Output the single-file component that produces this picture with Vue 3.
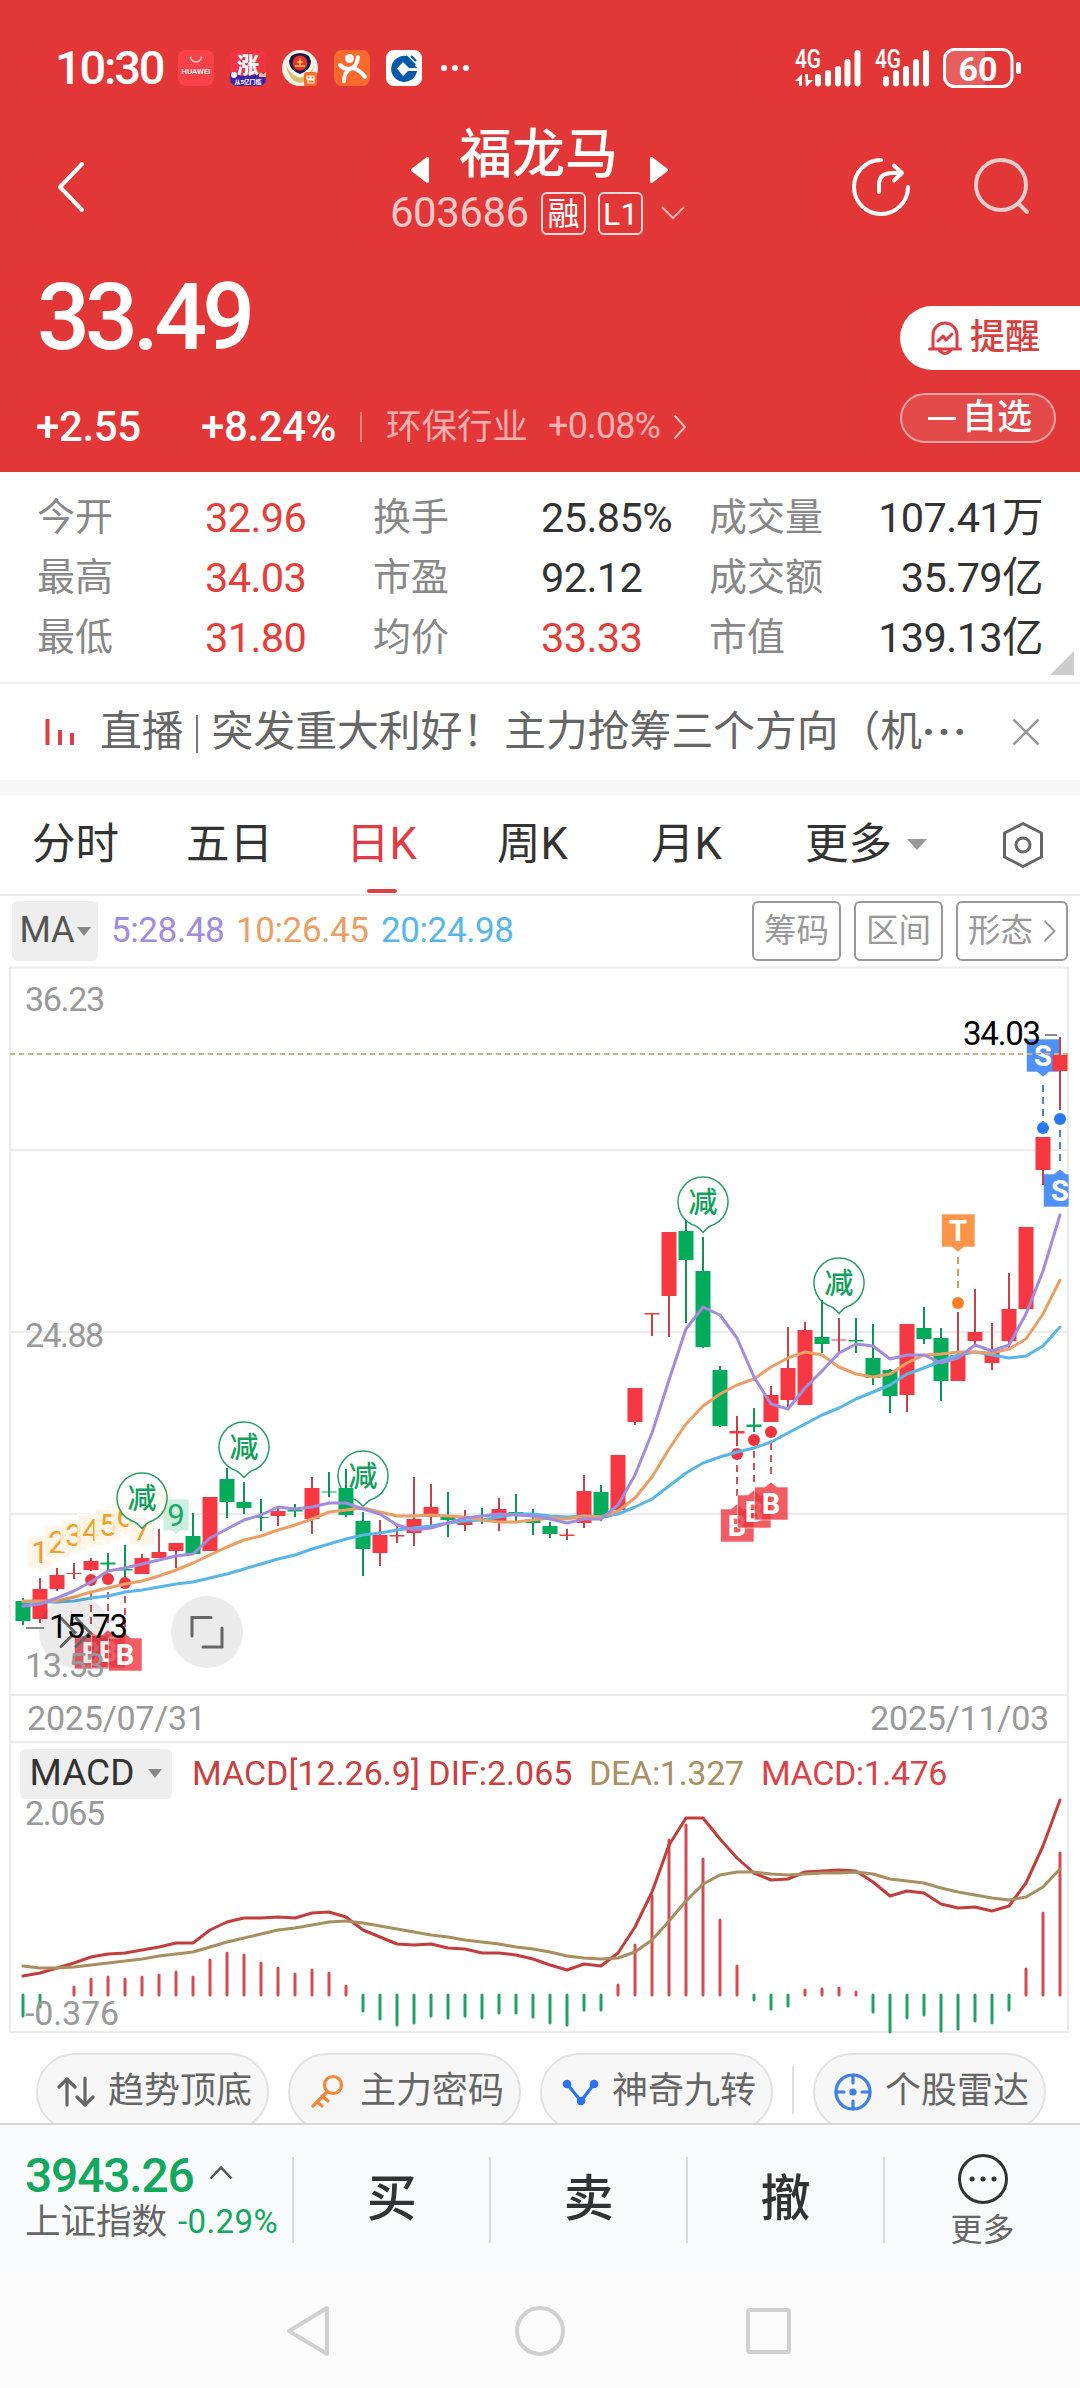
<template>
  <div class="stock-page">
    <header class="quote-header">
      <div class="status-bar">
        <span class="status-time">10:30</span>
        <div class="status-apps">
          <svg class="app-icon" viewBox="0 0 36 36">
            <rect width="36" height="36" rx="8" fill="#fb4249" />
            <path d="M12.5 6.5a5.5 5.5 0 0 0 11 0" fill="none" stroke="#fff" stroke-width="1.2" />
            <text x="18" y="24" class="t-huawei" textLength="29" lengthAdjust="spacingAndGlyphs">HUAWEI</text>
          </svg>
          <svg class="app-icon" viewBox="0 0 36 36">
            <rect width="36" height="36" rx="8" fill="#f23346" />
            <path d="M0 23l12 3 10-1 14-3v6q0 8-8 8H8q-8 0-8-8z" fill="#3c24a8" />
            <circle cx="4" cy="25" r="3" fill="#fff" />
            <path d="M29 24l2-2 2 2 3-2v5h-7z" fill="#ffb37a" />
            <text x="18" y="23" class="t-zhang">涨</text>
            <text x="18" y="34" class="t-zhang-sub" textLength="27">从5亿门槛</text>
          </svg>
          <svg class="app-icon" viewBox="0 0 36 36">
            <circle cx="18" cy="18" r="18" fill="#f8f3e7" />
            <path d="M4 15q3 16 14 18 11-2 14-18-2 9-14 13Q7 24 4 15z" fill="#dcbb73" />
            <path d="M9 6q9-6 18 0l2 5q0 9-11 13Q7 20 7 11z" fill="#1b1a48" />
            <circle cx="18" cy="13" r="7.500" fill="#e5322e" />
            <path d="M13 16h10M15 12h6M18 8v8" stroke="#f5c052" stroke-width="1.5" />
            <rect x="22" y="22" width="13" height="14" rx="3" fill="#fa6b20" />
            <path d="M25 26h3v3h-3zM29 26h3v3h-3zM26 30h6v3h-6z" fill="none" stroke="#fff" stroke-width="1.2" />
          </svg>
          <svg class="app-icon" viewBox="0 0 36 36">
            <rect width="36" height="36" rx="8" fill="#ff692d" />
            <circle cx="15.5" cy="8.5" r="4.5" fill="#fff" />
            <path d="M6 15q6 6 12 3 5-2 6-11M10 31q0-10 8-13 7 1 13 9" fill="none" stroke="#fff" stroke-width="4" stroke-linecap="round" />
          </svg>
          <svg class="app-icon" viewBox="0 0 36 36">
            <rect width="36" height="36" rx="8" fill="#fff" />
            <path d="M20 6A13 13 0 1 0 31 21H22l-5 5-6-7.500 6-6.500 6 6h8z" fill="#065aa9" />
            <path d="M20 6l9 9M25 6l5 5" stroke="#065aa9" stroke-width="2.4" />
          </svg>
          <span class="status-dots"><i></i><i></i><i></i></span>
        </div>
        <svg class="status-signal" viewBox="795 44 230 46">
          <g class="t-4g">
            <text x="795" y="67" textLength="26" lengthAdjust="spacingAndGlyphs">4G</text>
            <text x="875" y="67" textLength="26" lengthAdjust="spacingAndGlyphs">4G</text>
          </g>
          <path d="M795 80l7-7v12h-3v-5zM805 73h3v6h5l-7 7z" fill="#fff" />
          <path
            class="signal-bars"
            d="M818 76v6.500M828 72v10.500M838 68v14.500M847.500 61v21.500M857.500 52v30.500M886 78v4.500M896 72v10.500M906 68v14.500M916 61v21.500M926 52v30.500"
          />
          <path d="M953 49h32v36h-32a8 8 0 0 1-8-8v-20a8 8 0 0 1 8-8z" fill="#fff" opacity=".2" />
          <rect x="944.500" y="48.500" width="67.500" height="37" rx="10" fill="none" stroke="#fff" stroke-width="3" />
          <rect x="1016" y="61" width="5" height="12" rx="2.500" fill="#fff" />
          <text x="978" y="79.500" class="t-battery">60</text>
        </svg>
      </div>

      <div class="nav-bar">
        <svg class="nav-back" viewBox="0 0 30 52"><path d="M26 3L4 26l22 23" /></svg>
        <div class="nav-title">
          <div class="nav-name">
            <svg class="tri" viewBox="0 0 18 26"><path d="M16.500 1.500v23L1.500 13z" /></svg>
            <h1>福龙马</h1>
            <svg class="tri" viewBox="0 0 18 26"><path d="M1.500 1.500v23L16.500 13z" /></svg>
          </div>
          <div class="nav-code">
            <span>603686</span>
            <b>融</b>
            <b>L1</b>
            <svg viewBox="0 0 24 14"><path d="M1 1l11 11L23 1" /></svg>
          </div>
        </div>
        <div class="nav-actions">
          <svg class="nav-share" viewBox="0 0 62 62">
            <path d="M31 4a27 27 0 1 0 27 27M29 36V29q0-12 13-12h10M44 9.500l8 7.500-8 7.500" />
          </svg>
          <svg class="nav-search" viewBox="0 0 62 62">
            <circle cx="29" cy="29" r="25" /><path d="M47 48l8 8" />
          </svg>
        </div>
      </div>

      <div class="quote-body">
        <div class="quote-price">33.49</div>
        <div class="quote-change">
          <span class="chg-abs">+2.55</span>
          <span class="chg-pct">+8.24%</span>
          <i></i>
          <span class="industry">环保行业</span>
          <span class="industry-pct">+0.08%</span>
          <svg viewBox="0 0 14 26"><path d="M1.500 1.500L12 13 1.500 24.500" /></svg>
        </div>
        <div class="quote-btns">
          <button class="btn-alert">
            <svg viewBox="0 0 34 36">
              <path d="M5 28V15a12 12 0 0 1 24 0v13M1.500 29h31M11 30q6 7 12 0" />
              <path d="M10 21l5-5 3 4 6-6" />
            </svg>
            提醒
          </button>
          <button class="btn-fav"><i></i>自选</button>
        </div>
      </div>
    </header>

    <section class="stats">
      <template v-for="s in stats" :key="s.label">
        <span class="stat-label">{{ s.label }}</span>
        <span class="stat-value" :class="{ up: s.up }">{{ s.value }}</span>
      </template>
      <svg class="stats-corner" viewBox="0 0 24 24"><path d="M24 0v24H0z" /></svg>
    </section>

    <section class="live-bar">
      <svg class="live-icon" viewBox="0 0 30 28"><path d="M2.500 1v26M15 12v15M27 15v12" /></svg>
      <p>直播<i></i>突发重大利好！主力抢筹三个方向（机<em>···</em></p>
      <svg class="live-close" viewBox="0 0 28 28"><path d="M1.500 1.500l25 25M26.500 1.500l-25 25" /></svg>
    </section>

    <nav class="period-tabs">
      <span v-for="t in tabs" :key="t" :class="{ active: t === '日K' }">{{ t }}</span>
      <span class="more">更多<svg viewBox="0 0 22 13"><path d="M1 1h20L11 12z" /></svg></span>
      <svg class="tab-setting" viewBox="0 0 44 48">
        <path d="M22 2.500L40.500 12v24L22 45.500 3.500 36V12z" /><circle cx="22" cy="24" r="7" />
      </svg>
    </nav>

    <div class="ma-bar">
      <span class="ma-chip">MA<svg viewBox="0 0 14 9"><path d="M0 0h14L7 9z" /></svg></span>
      <span class="ma ma5">5:28.48</span>
      <span class="ma ma10">10:26.45</span>
      <span class="ma ma20">20:24.98</span>
      <div class="ma-btns">
        <span>筹码</span>
        <span>区间</span>
        <span>形态<svg viewBox="0 0 13 22"><path d="M1.500 1l10 10-10 10" /></svg></span>
      </div>
    </div>

    <svg class="kline" viewBox="0 966 1080 730">
      <path class="grid" d="M9 967.500H1069M10 1150H1068M10 1332H1068M10 1514H1068M10 1695H1068M10 967V1696M1068 967V1696" />
      <g class="axis">
        <text x="25" y="1011" textLength="80">36.23</text>
        <text x="25" y="1347" textLength="79">24.88</text>
      </g>

      <g class="nine">
        <g v-for="n in nines" :key="n.n" :class="{ last: n.n === 9 }">
          <path :d="`M${n.x - 13} ${n.y}h26v32h-9l-4 4l-4-4h-9z`" />
          <text :x="n.x" :y="n.y + 27">{{ n.n }}</text>
        </g>
      </g>

      <g v-for="b in reduces" :key="b.x" class="reduce">
        <path :d="`M${b.x - 11} ${b.y + 22.500}A25 25 0 1 1 ${b.x + 11} ${b.y + 22.500}q-5 1-11 8q-6-7-11-8z`" />
        <text :x="b.x" :y="b.y + 11">减</text>
      </g>

      <g v-for="(m, i) in marks" :key="'m' + i" class="mark" :class="m.type">
        <path class="box" :d="boxPath(m)" />
        <path class="lead" :d="`M${m.x} ${m.from}V${m.to}`" />
        <circle :cx="m.x" :cy="m.dot" r="6" />
        <text :x="m.x" :y="m.top + 27">{{ m.text }}</text>
      </g>

      <path class="last-price" d="M10 1054H1068" />

      <g v-for="(c, i) in candles" :key="i" :class="c[0] === 'r' ? 'rise' : 'fall'">
        <rect class="wick" :x="cx(i) - 1" :y="c[3]" width="2" :height="c[4] - c[3]" />
        <rect :x="cx(i) - 7.500" :y="c[1]" width="15" :height="c[2] - c[1]" />
      </g>

      <polyline class="line blue" :points="toPoints(ma20)" />
      <polyline class="line orange" :points="toPoints(ma10)" />
      <polyline class="line purple" :points="toPoints(ma5)" />

      <g class="float-btn">
        <circle cx="75" cy="1632" r="36" />
        <circle cx="207" cy="1632" r="36" />
        <path d="M61 1618l14 14.500-14 14M76 1618l14 14.500-14 14M192 1636V1617.500H211M222 1628V1647H203" />
      </g>
      <g class="extreme">
        <path d="M26 1628H44M1045 1035H1057" />
        <text x="49" y="1638" textLength="79">15.73</text>
        <text x="963" y="1045" textLength="78">34.03</text>
      </g>
      <g class="axis"><text x="25" y="1677" textLength="80">13.53</text></g>
    </svg>

    <div class="date-row"><span>2025/07/31</span><span>2025/11/03</span></div>

    <div class="macd-head">
      <span class="macd-chip">MACD<svg viewBox="0 0 14 9"><path d="M0 0h14L7 9z" /></svg></span>
      <span class="m-dif">MACD[12.26.9] DIF:2.065</span>
      <span class="m-dea">DEA:1.327</span>
      <span class="m-macd">MACD:1.476</span>
    </div>
    <svg class="macd" viewBox="0 1797 1080 238">
      <path class="grid" d="M10 1797V2033M1068 1797V2033M9 2032H1070" />
      <path
        v-for="(y, i) in bars"
        v-show="y"
        :key="i"
        class="bar"
        :class="y < 1995 ? 'rise' : 'fall'"
        :d="`M${cx(i)} 1995V${y}`"
      />
      <g class="axis">
        <text x="25" y="1825" textLength="80">2.065</text>
        <text x="25" y="2025" textLength="94">-0.376</text>
      </g>
      <polyline class="line dif" :points="toPoints(dif)" />
      <polyline class="line dea" :points="toPoints(dea)" />
    </svg>

    <section class="tools">
      <span class="tool">
        <svg viewBox="0 0 38 32">
          <path d="M10 29V3M2 11l8-8 8 8M28 2v27M20 21l8 8 8-8" stroke="#666" />
        </svg>
        趋势顶底
      </span>
      <span class="tool">
        <svg viewBox="0 0 38 36">
          <g stroke="#f5873a"><circle cx="24" cy="11" r="8.500" /><path d="M18 18L4 32M8 28l5 4M13 22l6 5" /></g>
        </svg>
        主力密码
      </span>
      <span class="tool">
        <svg viewBox="0 0 38 32">
          <path d="M6 8l14 17L33 8" stroke="#2a73ee" />
          <path d="M6 8h.1M20 25h.1M33 8h.1" stroke="#2a73ee" stroke-width="8.500" />
        </svg>
        神奇九转
      </span>
      <i></i>
      <span class="tool">
        <svg viewBox="0 0 38 38">
          <g stroke="#3e7fe8"><circle cx="19" cy="19" r="17" /><path d="M19 2v8M19 28v8M2 19h8M28 19h8" /><circle cx="19" cy="19" r="2" fill="#3e7fe8" /></g>
        </svg>
        个股雷达
      </span>
    </section>

    <footer class="trade-bar">
      <div class="index">
        <div class="index-top">3943.26<svg viewBox="0 0 24 14"><path d="M1.500 12.500L12 1.500l10.500 11" /></svg></div>
        <div class="index-sub">上证指数<span>-0.29%</span></div>
      </div>
      <div class="trade">买</div>
      <div class="trade">卖</div>
      <div class="trade">撤</div>
      <div class="trade trade-more">
        <svg viewBox="0 0 52 52">
          <circle cx="26" cy="26" r="23.500" />
          <path d="M15 26h.1M26 26h.1M37 26h.1" />
        </svg>
        更多
      </div>
    </footer>

    <div class="sys-nav">
      <svg viewBox="0 0 52 52"><path d="M42 3v46L4 26z" /></svg>
      <svg viewBox="0 0 52 52"><circle cx="26" cy="26" r="23" /></svg>
      <svg viewBox="0 0 52 52"><rect x="5" y="5" width="41" height="42" rx="2" /></svg>
    </div>
  </div>
</template>

<script setup>
const stats = [
  { label: '今开', value: '32.96', up: true },
  { label: '换手', value: '25.85%' },
  { label: '成交量', value: '107.41万' },
  { label: '最高', value: '34.03', up: true },
  { label: '市盈', value: '92.12' },
  { label: '成交额', value: '35.79亿' },
  { label: '最低', value: '31.80', up: true },
  { label: '均价', value: '33.33', up: true },
  { label: '市值', value: '139.13亿' }
]

const tabs = ['分时', '五日', '日K', '周K', '月K']

// [颜色, 实体上, 实体下, 影线上, 影线下]
const candles = [
  ['g', 1601, 1621, 1598, 1625], ['r', 1589, 1619, 1578, 1623], ['r', 1575, 1589, 1568, 1591],
  ['r', 1573, 1574, 1563, 1579], ['r', 1561, 1570, 1558, 1571], ['g', 1562.5, 1564.5, 1553, 1570],
  ['g', 1569, 1570.5, 1545, 1577], ['r', 1558, 1574, 1554, 1574], ['r', 1552, 1558, 1529, 1558],
  ['r', 1543, 1551, 1543, 1568], ['g', 1536, 1554, 1513, 1554], ['r', 1497, 1551, 1497, 1551],
  ['g', 1479, 1502, 1468, 1518], ['g', 1502, 1508, 1482, 1514], ['g', 1517, 1518, 1499, 1531],
  ['r', 1511, 1516, 1508, 1526], ['g', 1510, 1511.5, 1504, 1517], ['r', 1488, 1519, 1477, 1534],
  ['g', 1491.5, 1492.5, 1472, 1497], ['g', 1488, 1515, 1469, 1517], ['g', 1521, 1549, 1512, 1576],
  ['r', 1535, 1553, 1520, 1566], ['r', 1535, 1536.5, 1524, 1543], ['r', 1519, 1533, 1477, 1546],
  ['r', 1507, 1517, 1484, 1525], ['g', 1516, 1520, 1492, 1537], ['r', 1521, 1525, 1510, 1531],
  ['g', 1515.5, 1517, 1508, 1524], ['r', 1509, 1521, 1498, 1531], ['g', 1512, 1513.5, 1494, 1521],
  ['g', 1519, 1523, 1509, 1535], ['g', 1526, 1534, 1522, 1538], ['r', 1534.5, 1536, 1529, 1540],
  ['r', 1491, 1523, 1475, 1528], ['g', 1492, 1518, 1485, 1521], ['r', 1455, 1510, 1455, 1510],
  ['r', 1388, 1422, 1388, 1425], ['r', 1313, 1314.5, 1313, 1336], ['r', 1232, 1296, 1232, 1337],
  ['g', 1231, 1260, 1220, 1323], ['g', 1271, 1347, 1237, 1348], ['g', 1370, 1426, 1366, 1427],
  ['r', 1431, 1433.5, 1416, 1446], ['g', 1424.5, 1427, 1408, 1432], ['r', 1395, 1422, 1386, 1422],
  ['r', 1368, 1400, 1327, 1407], ['r', 1330, 1405, 1322, 1405], ['g', 1337, 1344, 1300, 1353],
  ['r', 1339.5, 1340.5, 1318, 1353], ['g', 1340, 1341.5, 1318, 1353], ['g', 1358, 1378, 1324, 1385],
  ['g', 1370, 1396, 1369, 1413], ['r', 1324, 1395, 1324, 1412], ['g', 1328, 1339, 1307, 1344],
  ['g', 1338, 1381, 1328, 1401], ['r', 1355, 1381, 1312, 1381], ['r', 1332, 1341, 1289, 1347],
  ['r', 1352, 1363, 1323, 1370], ['r', 1309, 1341, 1273, 1348], ['r', 1227, 1309, 1227, 1309],
  ['r', 1137, 1170, 1137, 1185], ['r', 1055, 1071, 1037, 1110]
]

const ma5 = [
  1606, 1604, 1598, 1591, 1582, 1571, 1568, 1564, 1560, 1556, 1554, 1538, 1529, 1520, 1515, 1507,
  1509, 1507, 1503, 1503, 1509, 1514, 1525, 1530, 1528, 1523, 1518, 1516, 1514, 1515, 1516, 1519,
  1523, 1519, 1519, 1505, 1475, 1433, 1380, 1329, 1307, 1315, 1338, 1377, 1404, 1409, 1388, 1371,
  1353, 1344, 1346, 1359, 1355, 1355, 1363, 1358, 1345, 1351, 1345, 1314, 1271, 1215
]
const ma10 = [
  1601, 1601, 1601, 1597, 1592, 1588, 1584, 1581, 1576, 1570, 1563, 1555, 1547, 1540, 1536, 1530,
  1525, 1519, 1512, 1510, 1508, 1512, 1516, 1516, 1515, 1516, 1517, 1520, 1522, 1522, 1520, 1518,
  1519, 1516, 1517, 1511, 1498, 1477, 1449, 1424, 1406, 1394, 1385, 1379, 1367, 1358, 1352, 1355,
  1367, 1374, 1377, 1374, 1363, 1355, 1354, 1352, 1352, 1353, 1349, 1339, 1314, 1280
]
const ma20 = [
  1602, 1602, 1602, 1601, 1598, 1596, 1592, 1590, 1587, 1584, 1582, 1578, 1574, 1569, 1564, 1559,
  1555, 1549, 1544, 1539, 1535, 1533, 1530, 1528, 1526, 1523, 1521, 1520, 1517, 1514, 1514, 1516,
  1517, 1516, 1517, 1514, 1507, 1499, 1486, 1473, 1463, 1457, 1452, 1448, 1442, 1433, 1424, 1415,
  1408, 1399, 1392, 1385, 1374, 1368, 1361, 1355, 1352, 1355, 1358, 1356, 1346, 1327
]

// MACD 柱顶端，0 表示无柱
const bars = [
  2016, 2007, 0, 1987, 1979, 1977, 1979, 1977, 1975, 1972, 1977, 1960, 1953, 1955, 1963, 1968,
  1974, 1970, 1973, 1986, 2011, 2019, 2025, 2023, 2016, 2018, 2016, 2018, 2013, 2013, 2017, 2023,
  2025, 2010, 2010, 1985, 1945, 1896, 1840, 1825, 1859, 1920, 1966, 2000, 2009, 2006, 1990, 1989,
  1988, 1992, 2012, 2032, 2018, 2015, 2031, 2029, 2021, 2023, 2010, 1969, 1913, 1853
]
const dif = [
  1976, 1973, 1968, 1963, 1957, 1954, 1953, 1950, 1947, 1943, 1943, 1930, 1922, 1918, 1918, 1917,
  1918, 1913, 1912, 1917, 1930, 1937, 1944, 1945, 1944, 1948, 1949, 1953, 1953, 1955, 1959, 1965,
  1970, 1964, 1966, 1953, 1927, 1892, 1845, 1818, 1818, 1839, 1858, 1873, 1880, 1879, 1872, 1871,
  1870, 1871, 1882, 1896, 1891, 1893, 1904, 1908, 1907, 1911, 1906, 1883, 1846, 1800
]
const dea = [
  1966, 1968, 1968, 1967, 1965, 1963, 1961, 1959, 1956, 1954, 1952, 1947, 1942, 1938, 1934, 1930,
  1928, 1925, 1922, 1921, 1923, 1926, 1929, 1932, 1935, 1937, 1940, 1942, 1944, 1947, 1949, 1952,
  1956, 1958, 1959, 1958, 1952, 1940, 1921, 1901, 1884, 1875, 1872, 1872, 1874, 1875, 1874, 1873,
  1873, 1872, 1874, 1879, 1881, 1883, 1888, 1892, 1895, 1898, 1900, 1897, 1887, 1869
]

const nines = [1536, 1526, 1519, 1514, 1509, 1500, 1513, 1487, 1499].map((y, i) => ({ n: i + 1, x: 40 + i * 17, y }))

const reduces = [
  { x: 142, y: 1498 },
  { x: 244, y: 1447 },
  { x: 363, y: 1476 },
  { x: 703, y: 1202 },
  { x: 839, y: 1283 }
]

const marks = [
  { type: 'buy', text: 'B', x: 91, top: 1636, dot: 1580, from: 1593, to: 1628 },
  { type: 'buy', text: 'B', x: 108, top: 1635, dot: 1579, from: 1592, to: 1627 },
  { type: 'buy', text: 'B', x: 125, top: 1638, dot: 1583, from: 1596, to: 1630 },
  { type: 'buy', text: 'B', x: 737, top: 1509, dot: 1454, from: 1465, to: 1501 },
  { type: 'buy', text: 'B', x: 754, top: 1495, dot: 1440, from: 1451, to: 1487 },
  { type: 'buy', text: 'B', x: 771, top: 1487, dot: 1432, from: 1443, to: 1479 },
  { type: 'turn', text: 'T', x: 958, top: 1214, dot: 1303, from: 1257, to: 1293, down: true },
  { type: 'sell', text: 'S', x: 1043, top: 1039, dot: 1128, from: 1085, to: 1122, down: true },
  { type: 'sell', text: 'S', x: 1060, top: 1174, dot: 1119, from: 1130, to: 1165, right: 9 }
]

const cx = (i) => 23 + i * 17
const toPoints = (list) => list.map((y, i) => `${cx(i)},${y}`).join(' ')

function boxPath({ x, top, down, right = 17 }) {
  const l = x - 16.5
  const r = x + right
  const b = top + 33
  return down
    ? `M${l} ${top}H${r}V${b}H${x + 6}L${x} ${b + 5}L${x - 6} ${b}H${l}z`
    : `M${l} ${top}H${x - 6}L${x} ${top - 5}L${x + 6} ${top}H${r}V${b}H${l}z`
}
</script>

<style>
body {
  background: #fff;
}
</style>

<style scoped>
.stock-page {
  width: 1080px;
  height: 2388px;
  overflow: hidden;
  display: flex;
  flex-direction: column;
  background: #fff;
  color: #333;
  font-family: Roboto, "Noto Sans CJK SC", sans-serif;
  line-height: 1.2;
}

.stock-page > * {
  flex-shrink: 0;
  box-sizing: border-box;
}

svg {
  display: block;
  fill: none;
}

button {
  border: 0;
  margin: 0;
  font: inherit;
}

/* 顶部 */
.quote-header {
  height: 472px;
  background: #e33637;
  color: #fff;
}

.status-bar {
  display: flex;
  align-items: center;
  height: 136px;
  padding: 0 55px 0 55px;
}

.status-time {
  width: 123px;
  font-size: 47px;
  font-weight: 500;
  letter-spacing: -2.2px;
}

.status-apps {
  display: flex;
  align-items: center;
  gap: 16px;
}

.app-icon {
  width: 36px;
  height: 36px;
}

.t-huawei,
.t-zhang,
.t-zhang-sub {
  fill: #fff;
  text-anchor: middle;
  font-size: 7px;
  font-weight: 500;
}

.t-zhang {
  font-size: 22px;
  font-weight: 900;
}

.t-zhang-sub {
  font-size: 6px;
  font-weight: 700;
}

.status-dots {
  display: flex;
  gap: 5px;
  margin-left: 3px;
}

.status-dots i {
  width: 6px;
  height: 6px;
  border-radius: 50%;
  background: #fff;
}

.status-signal {
  width: 230px;
  height: 46px;
  margin-left: auto;
}

.t-4g,
.t-battery {
  fill: #fff;
  font-size: 25px;
  font-weight: 500;
}

.t-battery {
  font-size: 34px;
  font-weight: 700;
  text-anchor: middle;
}

.signal-bars {
  stroke: #fff;
  stroke-width: 6;
  stroke-linecap: round;
}

.nav-bar {
  display: flex;
  justify-content: space-between;
  height: 114px;
  padding: 0 46px 0 56px;
}

.nav-back {
  width: 30px;
  height: 52px;
  margin-top: 25px;
  stroke: #fff;
  stroke-width: 4;
  stroke-linecap: round;
  stroke-linejoin: round;
}

.nav-title {
  margin-left: 139px;
  margin-top: -20px;
}

.nav-name {
  display: flex;
  align-items: center;
  justify-content: center;
  gap: 32px;
  height: 74px;
  padding-left: 4px;
}

.nav-name h1 {
  margin: 4px 0 0 -2px;
  font-size: 53px;
  font-weight: 500;
  line-height: 74px;
}

.tri {
  width: 18px;
  height: 26px;
  margin-top: 34px;
  fill: #fff;
  stroke: #fff;
  stroke-width: 3;
  stroke-linejoin: round;
}

.nav-code {
  display: flex;
  align-items: center;
  height: 46px;
  color: #ffc9c9;
  font-size: 42px;
}

.nav-code span {
  width: 151px;
  letter-spacing: -0.5px;
}

.nav-code b {
  box-sizing: border-box;
  width: 45px;
  height: 43px;
  margin-right: 12px;
  border: 2px solid #ffdada;
  border-radius: 6px;
  color: #fff;
  font-size: 32px;
  font-weight: 400;
  line-height: 40px;
  text-align: center;
}

.nav-code svg {
  width: 24px;
  height: 14px;
  margin-left: 6px;
  stroke: #ffb5b5;
  stroke-width: 2;
}

.nav-actions {
  display: flex;
  gap: 60px;
  margin-top: 20px;
}

.nav-actions svg {
  width: 62px;
  height: 62px;
  stroke: #fff;
  stroke-width: 4;
  stroke-linecap: round;
  stroke-linejoin: round;
}

.nav-actions .nav-search {
  stroke: #f0cccd;
}

.quote-body {
  display: grid;
  grid-template-columns: 1fr 180px;
  grid-template-rows: 144px 64px;
}

.quote-price {
  padding-left: 37px;
  font-size: 93px;
  font-weight: 500;
  line-height: 136px;
  letter-spacing: -4.8px;
}

.quote-change {
  grid-row: 2;
  display: flex;
  align-items: center;
  height: 66px;
  padding-left: 36px;
  font-size: 42px;
  font-weight: 500;
}

.chg-abs {
  width: 165px;
}

.chg-pct {
  width: 159px;
}

.chg-abs,
.chg-pct {
  letter-spacing: -0.4px;
}

.quote-change i {
  width: 2px;
  height: 30px;
  background: #ffffff66;
}

.industry {
  width: 162px;
  margin-left: 24px;
  color: #ffb0b0;
  font-size: 35.500px;
  font-weight: 400;
}

.industry-pct {
  width: 125px;
  color: #ffb0b0;
  font-size: 36px;
  font-weight: 400;
  letter-spacing: -0.8px;
}

.quote-change svg {
  width: 14px;
  height: 26px;
  stroke: #ffc0c0;
  stroke-width: 2;
}

.quote-btns {
  grid-area: 1 / 2 / 3 / 3;
  padding-top: 56px;
}

.btn-alert {
  display: flex;
  align-items: center;
  gap: 8px;
  width: 180px;
  height: 64px;
  padding: 0 0 0 28px;
  border-radius: 32px 0 0 32px;
  background: #fff;
  color: #d8403f;
  font-size: 35px;
  font-weight: 500;
}

.btn-alert svg {
  width: 34px;
  height: 36px;
  stroke: #db4048;
  stroke-width: 3;
  stroke-linecap: round;
  stroke-linejoin: round;
}

.btn-fav {
  display: flex;
  align-items: center;
  gap: 6px;
  box-sizing: border-box;
  width: 156px;
  height: 50px;
  margin-top: 23px;
  padding: 0 0 0 26px;
  border: 2px solid #f6a3a3;
  border-radius: 25px;
  background: #e54a4b;
  color: #fff;
  font-size: 35px;
  font-weight: 500;
}

.btn-fav i {
  width: 28px;
  height: 3px;
  background: #fff;
}

/* 行情数据 */
.stats {
  position: relative;
  display: grid;
  grid-template-columns: 168px 168px 168px 168px 130px 204px;
  grid-auto-rows: 60px;
  align-items: center;
  height: 212px;
  padding: 16px 37px 0;
  border-bottom: 2px solid #ededed;
}

.stat-label {
  color: #888;
  font-size: 38px;
}

.stat-value {
  color: #333;
  font-size: 41.500px;
  letter-spacing: -0.6px;
  white-space: nowrap;
}

.stat-value:nth-of-type(6n) {
  text-align: right;
}

.stat-value.up {
  color: #e63e38;
}

.stats-corner {
  position: absolute;
  right: 6px;
  bottom: 7px;
  width: 24px;
  height: 24px;
  fill: #ccc;
}

.live-bar {
  display: flex;
  align-items: center;
  height: 111px;
  padding: 0 40px 0 45px;
  border-bottom: 15px solid #f7f7f7;
}

.live-icon {
  width: 30px;
  height: 28px;
  stroke: #dd4048;
  stroke-width: 4;
}

.live-bar p {
  display: flex;
  align-items: center;
  width: 880px;
  margin: 0 0 0 25px;
  color: #666;
  font-size: 41.800px;
  white-space: nowrap;
}

.live-bar p i {
  width: 2px;
  height: 38px;
  margin: 4px 14px 0 12px;
  background: #777;
}

.live-bar em {
  font-style: normal;
  font-weight: 700;
  letter-spacing: 3px;
}

.live-close {
  width: 28px;
  height: 28px;
  margin-left: auto;
  stroke: #999;
  stroke-width: 2.500;
}

.period-tabs {
  display: flex;
  height: 101px;
  padding: 0 35px 0 32px;
  border-bottom: 2px solid #ebebeb;
  font-size: 43.500px;
  line-height: 100px;
}

.period-tabs > span {
  position: relative;
  width: 154px;
}

.period-tabs > span:nth-child(2) {
  width: 160px;
}

.period-tabs > span:nth-child(3) {
  width: 151px;
}

.period-tabs .active {
  color: #e33b43;
}

.period-tabs .active::after {
  content: "";
  position: absolute;
  left: 21px;
  bottom: 1px;
  width: 30px;
  height: 4px;
  border-radius: 2px;
  background: #df4047;
}

.period-tabs .more {
  display: flex;
  align-items: center;
}

.more svg {
  width: 22px;
  height: 13px;
  margin-left: 14px;
  fill: #999;
}

.tab-setting {
  width: 44px;
  height: 48px;
  margin: 26px 0 0 auto;
  stroke: #666;
  stroke-width: 3;
  stroke-linejoin: round;
}

/* 均线 */
.ma-bar {
  display: flex;
  align-items: center;
  height: 70px;
  padding: 0 12px;
}

.ma-chip {
  display: flex;
  align-items: center;
  justify-content: center;
  gap: 2px;
  width: 86px;
  height: 60px;
  border-radius: 6px;
  background: #eee;
  color: #555;
  font-size: 36px;
}

.ma-chip svg,
.macd-chip svg {
  width: 14px;
  height: 9px;
  fill: #888;
}

.ma {
  font-size: 35px;
  letter-spacing: -0.4px;
}

.ma5 {
  width: 125px;
  margin-left: 13px;
  color: #a28ce0;
}

.ma10 {
  width: 145px;
  color: #ec9f65;
}

.ma20 {
  color: #58b6e8;
}

.ma-btns {
  display: flex;
  gap: 13px;
  margin-left: auto;
}

.ma-btns span {
  display: flex;
  align-items: center;
  gap: 10px;
  box-sizing: border-box;
  height: 60px;
  padding: 0 10px;
  border: 2px solid #999;
  border-radius: 6px;
  color: #999;
  font-size: 32.500px;
}

.ma-btns svg {
  width: 13px;
  height: 22px;
  stroke: #999;
  stroke-width: 2;
}

/* K线 */
.kline {
  width: 1080px;
  height: 730px;
}

.grid {
  stroke: #ebebeb;
  stroke-width: 2;
}

.axis text {
  fill: #999;
  font-size: 34px;
}

.extreme text {
  fill: #000;
  font-size: 33px;
}

.extreme path {
  stroke: #888;
  stroke-width: 2;
}

.line {
  stroke-width: 3;
  stroke-linejoin: round;
  stroke-linecap: round;
}

.purple { stroke: #a28ce0; }
.orange { stroke: #ec9f65; }
.blue { stroke: #58b6e8; }

.rise { fill: #f63842; }
.fall { fill: #00ab5c; }
.rise .wick { fill: #c6434a; }
.fall .wick { fill: #0d9456; }

.last-price {
  stroke: #c8b08a;
  stroke-width: 2;
  stroke-dasharray: 5 4;
}

.nine path {
  fill: #fff1e0;
  fill-opacity: 0.75;
  stroke: #fff;
}

.nine text {
  fill: #f0a02c;
  font-size: 31px;
  text-anchor: middle;
}

.nine .last path { fill: #bcead4; }
.nine .last text { fill: #17a868; }

.reduce path {
  fill: #fff;
  fill-opacity: 0.85;
  stroke: #2a9d66;
  stroke-width: 1.500;
}

.reduce text {
  fill: #149f5c;
  font-size: 29px;
  font-weight: 500;
  text-anchor: middle;
}

.mark text {
  fill: #fff;
  font-size: 29px;
  font-weight: 700;
  text-anchor: middle;
}

.mark .lead {
  stroke-width: 2;
  stroke-dasharray: 7 5;
}

.mark .box {
  stroke: #fff;
  stroke-opacity: 0.6;
  stroke-width: 1;
}

.buy { fill: #ee343f; }
.buy .box { fill-opacity: 0.8; }
.buy .lead { stroke: #d0535b; }
.turn { fill: #ff7f22; }
.turn .box { fill: #ff954a; }
.turn .lead { stroke: #d59a60; }
.sell { fill: #2779f5; }
.sell .box { fill: #5090f9; }
.sell .lead { stroke: #4a84d0; }

.float-btn circle {
  fill: #000;
  fill-opacity: 0.08;
}

.float-btn path {
  stroke: #666;
  stroke-width: 3;
  stroke-linecap: round;
}

.date-row {
  display: flex;
  align-items: center;
  justify-content: space-between;
  height: 47px;
  margin: 0 11px 0 9px;
  padding: 0 18px 0 16px;
  border: 2px solid #ebebeb;
  border-top: 0;
  color: #999;
  font-size: 34px;
  letter-spacing: -0.2px;
}

.macd-head {
  display: flex;
  align-items: center;
  height: 54px;
  margin: 0 11px 0 9px;
  padding: 7px 0 0 9px;
  border: 2px solid #ebebeb;
  border-width: 0 2px;
  font-size: 34px;
  white-space: nowrap;
}

.macd-head .macd-chip {
  display: flex;
  align-items: center;
  justify-content: center;
  gap: 14px;
  width: 152px;
  height: 50px;
  border-radius: 6px;
  background: #eee;
  color: #333;
  font-size: 37px;
}

.m-dif {
  width: 397px;
  margin-left: 20px;
  color: #c8413f;
}

.m-dea {
  width: 172px;
  color: #ab8f62;
  letter-spacing: -0.3px;
}

.m-macd {
  color: #db424a;
  letter-spacing: -0.4px;
}

.macd {
  width: 1080px;
  height: 238px;
}

.bar {
  stroke-width: 3;
  stroke-linecap: round;
}

.bar.rise { stroke: #d24c52; }
.bar.fall { stroke: #22a066; }
.dif { stroke: #c23e3c; }
.dea { stroke: #a98e60; }

.tools {
  display: flex;
  gap: 19px;
  height: 88px;
  padding: 18px 34px 0 36px;
  overflow: hidden;
}

.tool {
  display: flex;
  align-items: center;
  gap: 13px;
  box-sizing: border-box;
  width: 233px;
  height: 78px;
  padding-left: 19px;
  border: 2px solid #e2e2e2;
  border-radius: 39px;
  background: #f7f7f7;
  color: #666;
  font-size: 36px;
  white-space: nowrap;
}

.tool svg {
  flex: none;
  width: 38px;
  height: 38px;
  stroke-width: 3.200;
  stroke-linecap: round;
  stroke-linejoin: round;
}

.tools > i {
  width: 2px;
  height: 48px;
  margin-top: 13px;
  background: #e0e0e0;
}

/* 底部 */
.trade-bar {
  display: flex;
  align-items: center;
  height: 151px;
  border-top: 2px solid #d6d6d8;
  background: #fafbfd;
}

.index {
  box-sizing: border-box;
  width: 293px;
  padding: 0 0 3px 25px;
}

.index-top {
  display: flex;
  align-items: center;
  gap: 15px;
  height: 48px;
  color: #12a85e;
  font-size: 48px;
  font-weight: 500;
  letter-spacing: -1.2px;
}

.index-top svg {
  width: 24px;
  height: 14px;
  margin-top: -6px;
  stroke: #555;
  stroke-width: 2.500;
}

.index-sub {
  display: flex;
  align-items: center;
  height: 44px;
  color: #666;
  font-size: 35.500px;
}

.index-sub span {
  margin-left: 11px;
  color: #12a85e;
  font-size: 33px;
  letter-spacing: 0.4px;
}

.trade {
  box-sizing: border-box;
  width: 197.500px;
  height: 86px;
  border-left: 2px solid #d9dade;
  color: #333;
  font-size: 50px;
  font-weight: 500;
  line-height: 84px;
  text-align: center;
}

.trade-more {
  display: flex;
  flex-direction: column;
  align-items: center;
  color: #666;
  font-size: 32px;
  font-weight: 400;
  line-height: 50px;
}

.trade-more svg {
  flex: none;
  width: 52px;
  height: 52px;
  margin-top: -4px;
  stroke: #333;
  stroke-width: 3;
}

.trade-more path {
  stroke-width: 5;
  stroke-linecap: round;
}

.sys-nav {
  display: flex;
  justify-content: center;
  gap: 177px;
  flex: 1;
  padding-top: 31px;
  background: #fcfcfc;
}

.sys-nav svg {
  width: 52px;
  height: 52px;
  stroke: #d0d0d0;
  stroke-width: 4;
  stroke-linejoin: round;
}
</style>
